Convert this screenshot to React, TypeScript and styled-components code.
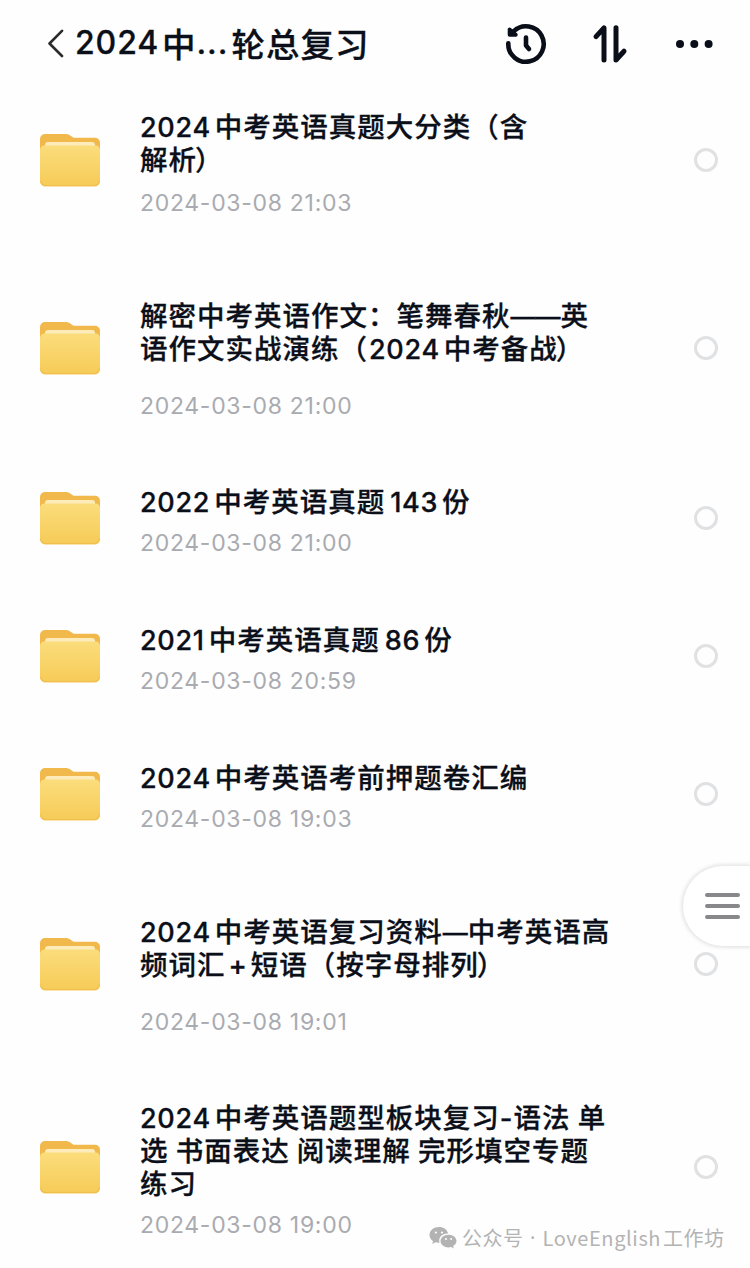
import React from 'react';
import styled, {createGlobalStyle} from 'styled-components';

type FileItem = {
  lines: string[];
  date: string;
  padTop: number;
  gap: number;
  padBottom: number;
}

const compact = {padTop: 35, gap: 11, padBottom: 29};
const roomy = {padTop: 51, gap: 27, padBottom: 28};

const files: FileItem[] = [
  {lines: ['2024中考英语真题大分类（含', '解析）'], date: '2024-03-08 21:03', padTop: 36, gap: 13, padBottom: 29},
  {lines: ['解密中考英语作文：笔舞春秋——英', '语作文实战演练（2024中考备战）'], date: '2024-03-08 21:00', ...roomy},
  {lines: ['2022中考英语真题143份'], date: '2024-03-08 21:00', ...compact},
  {lines: ['2021中考英语真题86份'], date: '2024-03-08 20:59', ...compact},
  {lines: ['2024中考英语考前押题卷汇编'], date: '2024-03-08 19:03', ...compact},
  {lines: ['2024中考英语复习资料—中考英语高', '频词汇+短语（按字母排列）'], date: '2024-03-08 19:01', ...roomy},
  {lines: ['2024中考英语题型板块复习-语法 单', '选 书面表达 阅读理解 完形填空专题', '练习'], date: '2024-03-08 19:00', ...compact},
];

// digits and dashes are set in Inter with their own tracking
const MixedText: React.FC<{text: string}> = ({text}) => (
  <>
    {text.split(/(\d+|—+|\+|-|）)/).filter(Boolean).map((part, i) => {
      if (/^\d/.test(part)) return <Digits key={i} $lead={i === 0 ? 0 : text.includes('（' + part) ? 1 : 5}>{part}</Digits>;
      if (part[0] === '—') return <Dash key={i}>{part}</Dash>;
      if (part === '-') return <Hyphen key={i}>{part}</Hyphen>;
      if (part === '+') return <Plus key={i}>{part}</Plus>;
      if (part === '）') return <CloseParen key={i}>{part}</CloseParen>;
      return <React.Fragment key={i}>{part}</React.Fragment>;
    })}
  </>
);

const FolderIcon: React.FC = () => (
  <svg width='60' height='54' viewBox='0 0 60 54'>
    <defs>
      <linearGradient id='folderFront' x1='0' y1='0' x2='0' y2='1'>
        <stop offset='0' stopColor='#fbdd7c'/>
        <stop offset='1' stopColor='#f6cb57'/>
      </linearGradient>
    </defs>
    <path d='M0 6a5 5 0 0 1 5-5h20c2.500 0 4 .6 6 2l2.500 1.700H55a5 5 0 0 1 5 5V24H0z' fill='#f1b94b'/>
    <path d='M5 12a3 3 0 0 1 3-3h44a3 3 0 0 1 3 3v5H5z' fill='#fdebb9'/>
    <path d='M0 17a4.500 4.500 0 0 1 4.500-4.500h51A4.500 4.500 0 0 1 60 17V48a5.500 5.500 0 0 1-5.500 5.500h-49A5.500 5.500 0 0 1 0 48z' fill='url(#folderFront)'/>
    <path d='M.6 47.500a5 5 0 0 0 5 5h48.800a5 5 0 0 0 5-5' fill='none' stroke='#efc04f' strokeWidth='1.200'/>
  </svg>
);

const BackIcon: React.FC = () => (
  <svg width='18' height='30' viewBox='0 0 18 30' fill='none' stroke='#2b2b2d' strokeWidth='2.600' strokeLinecap='round' strokeLinejoin='round'>
    <path d='M15 1.800L2.500 14.500L15 27'/>
  </svg>
);

const HistoryIcon: React.FC = () => (
  <svg width='44' height='44' viewBox='0 0 44 44' fill='none' stroke='#0a0e18' strokeWidth='4.600' strokeLinecap='round' strokeLinejoin='round'>
    <path d='M4.300 21.300A17.700 17.700 0 1 0 9.800 9.200'/>
    <path d='M5.600 7.400V12.800H11.800Z' fill='#0a0e18' strokeWidth='3.800'/>
    <path d='M22 15.500V23.500L25 27'/>
  </svg>
);

const SortIcon: React.FC = () => (
  <svg width='36' height='42' viewBox='0 0 36 42' fill='none' stroke='#0a0e18' strokeWidth='5' strokeLinecap='round' strokeLinejoin='round'>
    <path d='M4 13.700L12 4.800V37'/>
    <path d='M24 4.800V37L32 28.200'/>
  </svg>
);

const MoreIcon: React.FC = () => (
  <svg width='40' height='10' viewBox='0 0 40 10' fill='#0a0e18'>
    <circle cx='5' cy='5' r='4'/>
    <circle cx='19.300' cy='5' r='4'/>
    <circle cx='33.600' cy='5' r='4'/>
  </svg>
);

const WechatIcon: React.FC = () => (
  <svg width='28' height='24' viewBox='0 0 28 24' fill='#b3b3b3'>
    <path d='M10 1C4.700 1 .5 4.500.5 9c0 2.600 1.400 4.800 3.600 6.200L3.200 18l3.300-1.700c1.100.3 2.200.5 3.500.5h.6A7.800 7.800 0 0 1 10.200 14.500c0-4 3.700-7 8.300-7h.7C18.300 3.700 14.500 1 10 1z'/>
    <path d='M27.500 15c0-3.500-3.600-6.300-8-6.300s-8 2.800-8 6.300 3.600 6.400 8 6.400c1 0 1.900-.1 2.700-.4l2.600 1.500-.7-2.400c2-1.200 3.400-3 3.400-5.100z'/>
    <g fill='#fff'>
      <circle cx='6.900' cy='6.500' r='1.100'/>
      <circle cx='13' cy='6.500' r='1.100'/>
      <circle cx='17' cy='13' r='1'/>
      <circle cx='22.200' cy='13' r='1'/>
    </g>
  </svg>
);

const App: React.FC = () => {
  return (
    <Root>
      <GlobalStyle/>
      <Header>
        <BackIcon/>
        <HeaderTitle>
          <HeaderLatin $width={87}>2024</HeaderLatin>
          <span>中</span>
          <HeaderLatin $width={35}>...</HeaderLatin>
          <span>轮总复习</span>
        </HeaderTitle>
        <Actions>
          <HistoryIcon/>
          <SortIcon/>
          <MoreButton><MoreIcon/></MoreButton>
        </Actions>
      </Header>
      {files.map((file) => (
        <Row key={file.lines[0]}>
          <FolderIcon/>
          <Body $top={file.padTop} $bottom={file.padBottom}>
            {file.lines.map((line) => <TitleLine key={line}><MixedText text={line}/></TitleLine>)}
            <DateText $gap={file.gap}>{file.date}</DateText>
          </Body>
          <Radio/>
        </Row>
      ))}
      <FloatingMenu>
        <Bar/>
        <Bar/>
        <Bar/>
      </FloatingMenu>
      <Watermark>
        <WechatIcon/>
        <WatermarkText>
          <span>公众号</span>
          <Dot>·</Dot>
          <WatermarkLatin>LoveEnglish</WatermarkLatin>
          <span>工作坊</span>
        </WatermarkText>
      </Watermark>
    </Root>
  );
}

export default App;

const GlobalStyle = createGlobalStyle`
  body {
    margin: 0;
    background-color: #fff;
  }

  svg {
    display: block;
    flex-shrink: 0;
  }
`;

const Root = styled.div`
  position: relative;
  width: 750px;
  height: 1268px;
  overflow: hidden;
  background-color: #fefefe;
  font-family: 'Noto Sans CJK SC', sans-serif;
  color: #0b0f19;
`;

const Header = styled.header`
  display: flex;
  align-items: center;
  box-sizing: border-box;
  height: 73px;
  padding: 15px 35px 0 47px;
`;

const HeaderTitle = styled.h1`
  display: flex;
  margin: -2px 0 0 10px;
  font-size: 33.500px;
  font-weight: 500;
  line-height: 44px;
  letter-spacing: 1px;
  white-space: nowrap;
  -webkit-text-stroke: 0.300px currentColor;
`;

const HeaderLatin = styled.span<{$width: number}>`
  width: ${(props) => props.$width}px;
  font-family: Inter, sans-serif;
  font-size: 32px;
  letter-spacing: 0.900px;
`;

const Actions = styled.div`
  display: flex;
  align-items: center;
  gap: 44px;
  margin-left: auto;
`;

const MoreButton = styled.div`
  margin-left: 3px;
`;

const Row = styled.div`
  display: flex;
  align-items: center;
  padding: 0 32px 0 40px;
`;

const Body = styled.div<{$top: number; $bottom: number}>`
  flex: 1;
  margin-left: 40px;
  padding: ${(props) => props.$top}px 0 ${(props) => props.$bottom}px;
`;

const TitleLine = styled.div`
  height: 33px;
  font-size: 27.500px;
  font-weight: 500;
  line-height: 33px;
  letter-spacing: 1px;
  white-space: nowrap;
  -webkit-text-stroke: 0.300px currentColor;
`;

const Digits = styled.span<{$lead: number}>`
  margin-left: ${(props) => props.$lead}px;
  margin-right: 4px;
  font-family: Inter, sans-serif;
  font-size: 27px;
  letter-spacing: 0.700px;
`;

const Dash = styled.span`
  font-family: Inter, sans-serif;
  font-size: 25px;
  letter-spacing: 0;
`;

const Hyphen = styled.span`
  font-family: Inter, sans-serif;
`;

const Plus = styled.span`
  margin: 0 3px;
  font-family: Inter, sans-serif;
`;

const CloseParen = styled.span`
  margin-left: -2px;
`;

const DateText = styled.div<{$gap: number}>`
  margin-top: ${(props) => props.$gap}px;
  font-family: Inter, sans-serif;
  font-size: 23px;
  line-height: 30px;
  letter-spacing: 0.700px;
  color: #a9abb0;
`;

const Radio = styled.div`
  box-sizing: border-box;
  width: 24px;
  height: 24px;
  border: 3px solid #e0e1e3;
  border-radius: 50%;
`;

const FloatingMenu = styled.div`
  position: absolute;
  top: 866px;
  right: 0;
  display: flex;
  flex-direction: column;
  justify-content: center;
  gap: 7px;
  box-sizing: border-box;
  width: 67px;
  height: 80px;
  padding-left: 22px;
  border-radius: 40px 0 0 40px;
  background-color: #fff;
  box-shadow: 0 0 4px 1px #dcdcdc;
`;

const Bar = styled.div`
  width: 35px;
  height: 4px;
  border-radius: 2px;
  background-color: #88888a;
`;

const Watermark = styled.div`
  position: absolute;
  left: 429px;
  top: 1224px;
  display: flex;
  align-items: center;
`;

const WatermarkText = styled.div`
  display: flex;
  margin-left: 5px;
  font-size: 20px;
  line-height: 28px;
  letter-spacing: 0.500px;
  white-space: nowrap;
  color: #b3b3b3;
`;

const Dot = styled.span`
  width: 19px;
  font-family: 'Noto Sans', sans-serif;
  text-align: center;
`;

const WatermarkLatin = styled.span`
  margin-right: 2px;
  letter-spacing: 0.600px;
`;
